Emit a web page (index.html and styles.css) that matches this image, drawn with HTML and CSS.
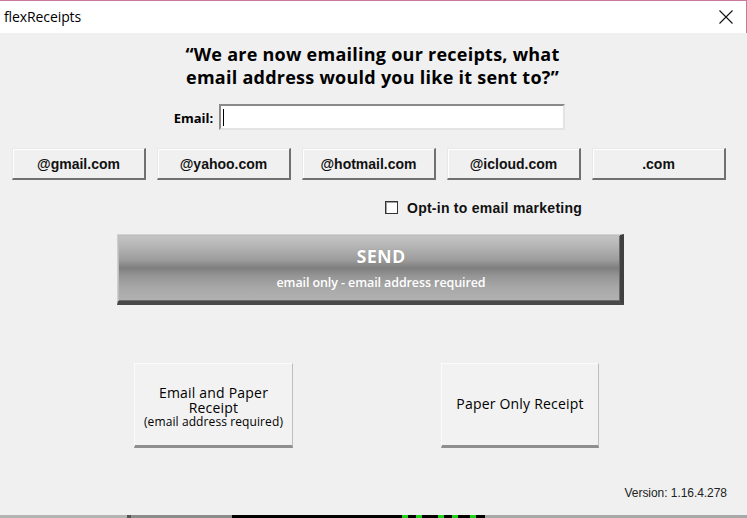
FILE: index.html
```html
<!DOCTYPE html>
<html>
<head>
<meta charset="utf-8">
<title>flexReceipts</title>
<link rel="stylesheet" href="styles.css">
</head>
<body>
<div class="window">
  <div class="titlebar">
    <span class="title">flexReceipts</span>
    <span class="close" aria-label="Close">
      <svg width="14" height="14" viewBox="0 0 14 14"><path d="M0.5 0.5 L13.5 13.5 M13.5 0.5 L0.5 13.5" stroke="#111" stroke-width="1.1" fill="none"/></svg>
    </span>
  </div>
  <div class="content">
    <h1 class="heading">“We are now emailing our receipts, what<br>email address would you like it sent to?”</h1>
    <div class="email-row">
      <label class="email-label" for="email">Email:</label>
      <div class="email-input"><span class="caret"></span></div>
    </div>
    <div class="domains">
      <div class="domain-btn">@gmail.com</div>
      <div class="domain-btn">@yahoo.com</div>
      <div class="domain-btn">@hotmail.com</div>
      <div class="domain-btn">@icloud.com</div>
      <div class="domain-btn">.com</div>
    </div>
    <div class="optin">
      <span class="checkbox"></span>
      <span class="optin-label">Opt-in to email marketing</span>
    </div>
    <div class="send">
      <div class="send-title">SEND</div>
      <div class="send-sub">email only - email address required</div>
    </div>
    <div class="choices">
      <div class="choice-btn choice-left">
        <div class="choice-main">Email and Paper</div>
        <div class="choice-main">Receipt</div>
        <div class="choice-note">(email address required)</div>
      </div>
      <div class="choice-btn choice-right">
        <div class="choice-main">Paper Only Receipt</div>
      </div>
    </div>
    <div class="version">Version: 1.16.4.278</div>
    <div class="taskstrip">
      <span class="seg s1"></span><span class="seg s2"></span><span class="seg s3"></span><span class="seg s4"><i></i><i></i><i></i><i></i><i></i></span><span class="seg s5"></span>
    </div>
  </div>
</div>
</body>
</html>
```
FILE: styles.css
```css
html, body {
  margin: 0;
  padding: 0;
  width: 747px;
  height: 518px;
  overflow: hidden;
  background: #f0f0f0;
}
.window {
  width: 747px;
  height: 518px;
  display: flex;
  flex-direction: column;
}
.titlebar {
  height: 32px;
  background: #ffffff;
  border-top: 1px solid #c8799c;
  border-right: 1px solid #c8799c;
  display: flex;
  align-items: center;
  justify-content: space-between;
  padding-left: 4px;
  padding-right: 13px;
  box-sizing: content-box;
}
.title {
  font-family: "Open Sans", "Noto Sans", sans-serif;
  font-size: 14px;
  color: #000;
  letter-spacing: -0.1px;
  margin-top: -1px;
}
.close {
  display: flex;
  width: 14px;
  height: 14px;
  margin-top: -1px;
}
.content {
  flex: 1;
  display: flex;
  flex-direction: column;
  background: #f0f0f0;
}
.heading {
  margin: 10px 0 0 0;
  font-family: "Open Sans", "Noto Sans", sans-serif;
  font-weight: 700;
  font-size: 18px;
  line-height: 23px;
  letter-spacing: 0.25px;
  text-align: center;
  color: #000;
  padding-right: 2px;
}
.email-row {
  margin-top: 15px;
  height: 26px;
  display: flex;
  align-items: center;
  justify-content: center;
  gap: 6px;
  padding-right: 8px;
}
.email-label {
  font-family: "Open Sans", "Noto Sans", sans-serif;
  font-weight: 700;
  font-size: 13px;
  color: #000;
  padding-top: 1px;
}
.email-input {
  width: 340px;
  height: 22px;
  background: #fff;
  border-style: solid;
  border-width: 2px;
  border-color: #8a8a8a #e3e3e3 #e3e3e3 #8a8a8a;
  display: flex;
  align-items: center;
  padding-left: 2px;
}
.caret {
  width: 1px;
  height: 17px;
  background: #000;
}
.domains {
  margin-top: 18px;
  height: 32px;
  display: flex;
  gap: 11px;
  padding-left: 12px;
}
.domain-btn {
  width: 134px;
  height: 32px;
  box-sizing: border-box;
  background: #f0f0f0;
  border-style: solid;
  border-width: 1px 2px 2px 1px;
  border-color: #e8e8e8 #707070 #707070 #e8e8e8;
  box-shadow: inset 1px 1px 0 #ffffff;
  display: flex;
  align-items: center;
  justify-content: center;
  font-family: "Liberation Sans", Arial, sans-serif;
  font-weight: 700;
  font-size: 14px;
  color: #111;
}
.optin {
  margin-top: 21px;
  height: 13px;
  display: flex;
  align-items: center;
  gap: 9px;
  padding-left: 385px;
}
.checkbox {
  width: 11px;
  height: 11px;
  border: 1px solid #333;
  background: #fff;
  box-shadow: inset 1px 1px 0 #a0a0a0;
}
.optin-label {
  font-family: "Liberation Sans", Arial, sans-serif;
  font-weight: 700;
  font-size: 14px;
  color: #111;
  letter-spacing: 0.25px;
}
.send {
  margin-top: 20px;
  margin-left: 117px;
  width: 507px;
  height: 71px;
  box-sizing: border-box;
  padding-left: 24px;
  border-style: solid;
  border-width: 1px 4px 4px 1px;
  border-color: #d4d4d4 #404040 #484848 #cfcfcf;
  background: linear-gradient(to bottom, #c6c6c6 0%, #b4b4b4 18%, #9c9c9c 38%, #7e7e7e 50%, #959595 62%, #a8a8a8 80%, #b2b2b2 100%);
  box-shadow: inset 1px 1px 0 #bdbdbd, inset -1px -1px 0 #6a6a6a;
  display: flex;
  flex-direction: column;
  align-items: center;
  color: #fff;
  font-family: "Open Sans", "Noto Sans", sans-serif;
}
.send-title {
  margin-top: 10px;
  font-size: 18px;
  font-weight: 700;
  line-height: 22px;
  letter-spacing: 0.3px;
  text-shadow: 0 0 1px rgba(0,0,0,0.25);
}
.send-sub {
  margin-top: 8px;
  font-size: 12.5px;
  font-weight: 600;
  line-height: 16px;
  letter-spacing: -0.1px;
}
.choices {
  margin-top: 58px;
  height: 85px;
  display: flex;
  padding-left: 134px;
  gap: 148px;
}
.choice-btn {
  width: 159px;
  height: 85px;
  box-sizing: border-box;
  background: #f2f2f2;
  border-style: solid;
  border-width: 1px 1px 3px 1px;
  border-color: #fbfbfb #bdbdbd #8f8f8f #fbfbfb;
  display: flex;
  flex-direction: column;
  align-items: center;
  justify-content: center;
  font-family: "Open Sans", "Noto Sans", sans-serif;
  font-weight: 500;
  color: #000;
  text-align: center;
}
.choice-right {
  width: 158px;
  padding-bottom: 2px;
}
.choice-main {
  font-size: 14px;
  line-height: 15px;
  letter-spacing: 0.2px;
}
.choice-note {
  font-size: 12px;
  line-height: 14px;
  letter-spacing: 0.1px;
}
.choice-left {
  padding-top: 4px;
}
.version {
  margin-top: 38px;
  height: 14px;
  line-height: 14px;
  text-align: right;
  padding-right: 20px;
  font-family: "Liberation Sans", Arial, sans-serif;
  font-size: 12px;
  letter-spacing: -0.05px;
  color: #222;
}
.taskstrip {
  margin-top: 15px;
  height: 3px;
  display: flex;
}
.seg { display: block; height: 3px; }
.s1 { width: 127px; background: #b4b4b4; }
.s2 { width: 4px; background: #555; }
.s3 { width: 101px; background: #8c8c8c; }
.s4 { width: 253px; background: #000; display: flex; gap: 0; }
.s4 i { display: block; width: 6px; height: 3px; background: #1fd31f; }
.s4 i:nth-child(1) { margin-left: 170px; }
.s4 i:nth-child(2) { margin-left: 8px; }
.s4 i:nth-child(3) { margin-left: 16px; }
.s4 i:nth-child(4) { margin-left: 8px; }
.s4 i:nth-child(5) { margin-left: 12px; }
.s5 { flex: 1; background: #a8a8a8; }
```
